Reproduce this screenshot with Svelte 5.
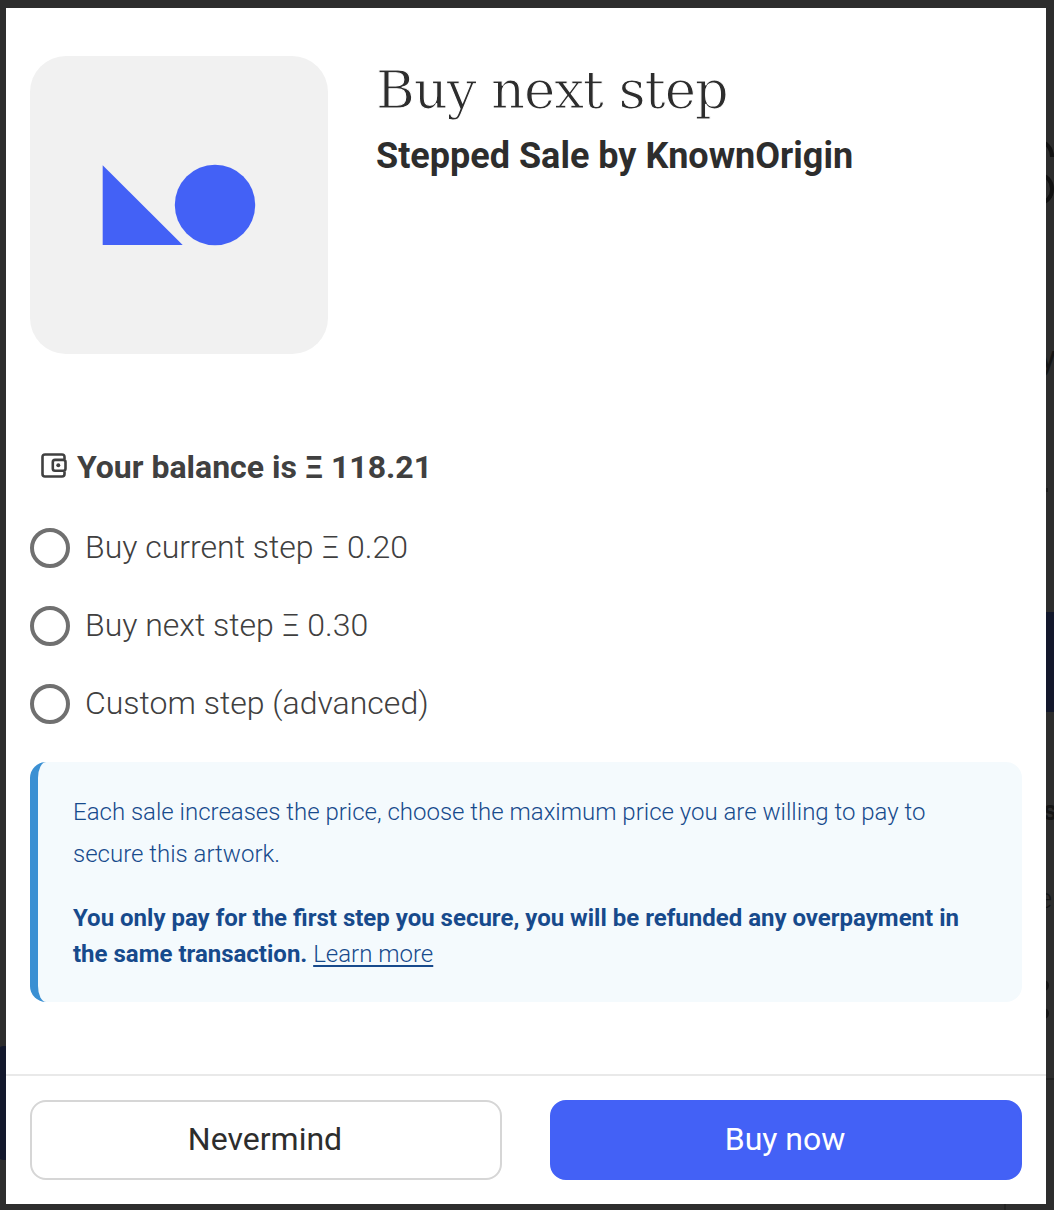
<script>
  let selected = $state('');

  const steps = [
    { id: 'current', label: 'Buy current step Ξ 0.20' },
    { id: 'next', label: 'Buy next step Ξ 0.30' },
    { id: 'custom', label: 'Custom step (advanced)' }
  ];
</script>

<main class="page">
  <!-- Slivers of the dimmed page behind the dialog -->
  <div class="backdrop" aria-hidden="true">
    <span class="ring upper"></span>
    <span class="ring lower"></span>
    <span class="letter letter-y">y</span>
    <span class="tick"></span>
    <span class="block right"></span>
    <span class="letter letter-s">s</span>
    <span class="letter letter-e">e</span>
    <span class="dot first"></span>
    <span class="dot second"></span>
    <span class="block left"></span>
    <span class="rule across"></span>
    <span class="rule down"></span>
  </div>

  <section class="modal" role="dialog" aria-labelledby="title">
    <div class="body">
      <header class="artwork">
        <div class="thumb">
          <svg viewBox="0 0 298 298" width="298" height="298" aria-hidden="true">
            <path d="M72.7 109.3V189H152.7Z" />
            <circle cx="185" cy="149" r="40.2" />
          </svg>
        </div>
        <div class="heading">
          <h1 id="title">Buy next step</h1>
          <h2>Stepped Sale by KnownOrigin</h2>
        </div>
      </header>

      <p class="balance">
        <svg class="wallet" viewBox="0 0 26 25" width="26" height="25" aria-hidden="true">
          <path d="M23.5 6V4Q23.5 1.5 21 1.5H4Q1.5 1.5 1.5 4V21Q1.5 23.500 4 23.500H21Q23.500 23.500 23.500 21V18.500" />
          <rect x="11.800" y="6.900" width="12.700" height="10.900" rx="2.200" />
          <circle cx="17.300" cy="12.200" r="2" />
        </svg>
        <span>Your balance is Ξ 118.21</span>
      </p>

      <div class="options">
        {#each steps as step (step.id)}
          <label>
            <input type="radio" name="step" value={step.id} bind:group={selected} />
            <span>{step.label}</span>
          </label>
        {/each}
      </div>

      <aside class="notice">
        <p class="intro">Each sale increases the price, choose the maximum price you are willing to pay to<br />secure this artwork.</p>
        <p class="refund"><strong>You only pay for the first step you secure, you will be refunded any overpayment in<br />the same transaction.</strong> <a href="#learn">Learn more</a></p>
      </aside>
    </div>

    <footer>
      <button class="secondary">Nevermind</button>
      <button class="primary">Buy now</button>
    </footer>
  </section>
</main>

<style>
  :global(body) { background: #2d2d2d; }
  * { box-sizing: border-box; }
  h1, h2, p { margin: 0; white-space: nowrap; }

  .page {
    position: relative;
    width: 1054px;
    height: 1210px;
    padding: 8px 8px 6px 6px;
    overflow: hidden;
    background: #2d2d2d;
    font-family: Roboto, sans-serif;
  }
  .backdrop { position: absolute; inset: 0; overflow: hidden; color: #151515; }
  .backdrop span { position: absolute; }
  .ring { border: 4px solid #121212; border-radius: 50%; }
  .upper { left: 1026px; top: 140px; width: 28px; height: 34px; clip-path: inset(0 0 17px 0); }
  .lower { left: 1026px; top: 173px; width: 28px; height: 32px; }
  .letter-y { left: 1040px; top: 337px; font-size: 34px; line-height: 40px; }
  .letter-s { left: 1043px; top: 796px; font-size: 28px; line-height: 30px; font-weight: 700; }
  .letter-e { left: 1038px; top: 884px; font-size: 27px; line-height: 30px; font-weight: 300; }
  .tick { left: 1046px; top: 488px; width: 2px; height: 4px; background: #1c1c1c; }
  .right { left: 1040px; top: 612px; width: 14px; height: 100px; background: #13182c; }
  .left { left: -4px; top: 1046px; width: 20px; height: 114px; border-radius: 8px; background: #13182c; }
  .dot { left: 1038px; width: 11px; height: 11px; border-radius: 50%; background: #151515; }
  .first { top: 980px; }
  .second { top: 1008px; }
  .across { left: 1040px; top: 1078px; width: 14px; height: 2px; background: #222; }
  .down { left: 1004px; top: 1200px; width: 2px; height: 10px; background: #222; }

  .modal {
    position: relative;
    display: flex;
    flex-direction: column;
    height: 1196px;
    background: #fff;
  }
  .body { flex: 1; padding: 48px 24px 0; }
  .artwork { display: flex; gap: 48px; }
  .thumb {
    width: 298px;
    height: 298px;
    border-radius: 36px;
    overflow: hidden;
    background: #f1f1f1;
  }
  .thumb svg { display: block; fill: #4361f6; }
  h1 {
    height: 72px;
    padding-top: 1px;
    color: #2d2d2d;
    font: 400 53px/66px "DejaVu Serif", serif;
    letter-spacing: -1.2px;
    -webkit-text-stroke: 1.1px #fff;
  }
  h2 { color: #2d2d2d; font-size: 36px; font-weight: 700; line-height: 56px; }

  .balance {
    display: flex;
    align-items: center;
    gap: 10px;
    height: 40px;
    margin-top: 93px;
    padding-left: 11px;
    color: #404040;
    font-size: 32px;
    font-weight: 700;
  }
  .wallet { margin-bottom: 3px; fill: none; stroke: #404040; stroke-width: 2.600; }
  .wallet circle { fill: #404040; stroke: none; }

  .options { display: flex; flex-direction: column; gap: 38px; margin-top: 41px; }
  label {
    display: flex;
    align-items: center;
    gap: 15px;
    height: 40px;
    color: #404040;
    font-size: 32px;
    font-weight: 300;
    line-height: 40px;
  }
  label span { padding-bottom: 2px; }
  input {
    appearance: none;
    width: 40px;
    height: 40px;
    margin: 0;
    border: 4px solid #707070;
    border-radius: 50%;
  }
  input:checked { background: radial-gradient(#4361f6 45%, transparent 48%); }

  .notice {
    height: 240px;
    margin-top: 38px;
    padding: 29px 35px;
    border-left: 8px solid #3b90d3;
    border-radius: 16px;
    background: #f4fafd;
    color: #174a8c;
    font-size: 24px;
  }
  .intro { font-weight: 300; line-height: 42px; }
  .refund { margin-top: 25px; font-weight: 300; line-height: 36px; }
  .refund strong { font-weight: 700; }
  .refund a { color: inherit; text-decoration-thickness: 2px; text-underline-offset: 3px; }

  footer {
    display: grid;
    grid-template-columns: 1fr 1fr;
    gap: 48px;
    height: 130px;
    padding: 24px;
    border-top: 2px solid #e9e9e9;
  }
  button {
    height: 80px;
    padding: 0 2px 2px 0;
    border: 2px solid #d6d6d6;
    border-radius: 16px;
    background: #fff;
    color: #2d2d2d;
    font: 400 32px/40px Roboto, sans-serif;
  }
  .primary { border-color: #4361f6; background: #4361f6; color: #fff; }
</style>
